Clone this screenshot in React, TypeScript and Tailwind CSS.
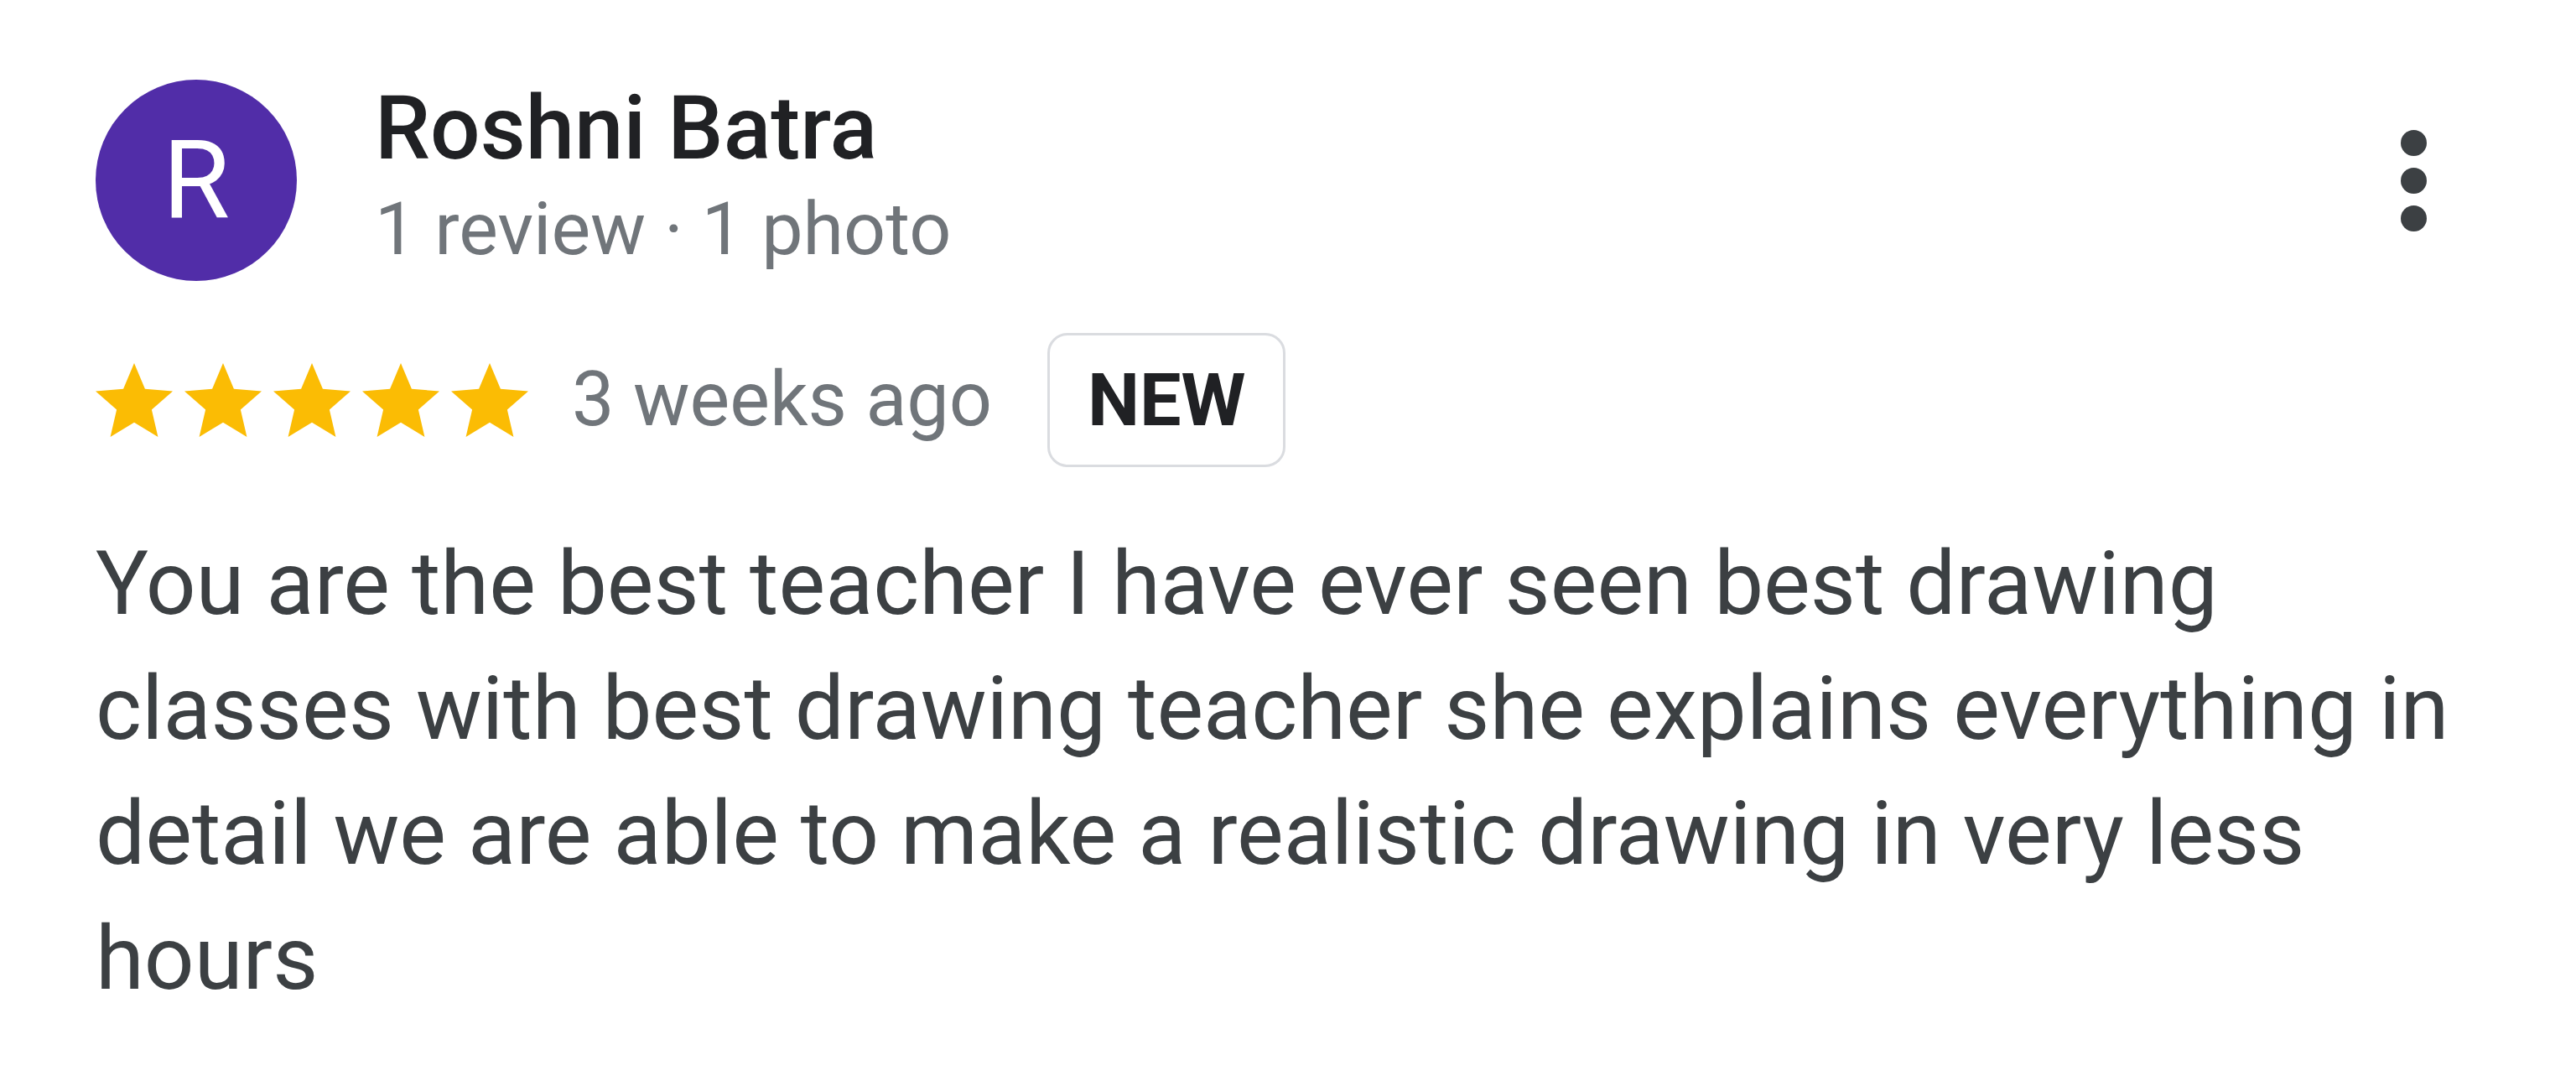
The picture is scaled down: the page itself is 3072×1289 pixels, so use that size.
import React from "react";

function Star() {
  return (
    <svg width="92" height="88" viewBox="2 2 20 19" preserveAspectRatio="none" className="block">
      <path d="M12 17.27L18.18 21l-1.64-7.03L22 9.24l-7.19-.61L12 2 9.19 8.63 2 9.24l5.46 4.73L5.82 21z" fill="#fbbc04" />
    </svg>
  );
}

export default function App() {
  return (
    <div
      className="w-[3072px] h-[1289px] bg-white pl-[114px] pr-[114px] pt-[91px] overflow-hidden"
      style={{ fontFamily: "Roboto, 'Noto Sans', sans-serif" }}
    >
      <div className="flex items-start">
        <div className="mt-[4px] w-[240px] h-[240px] rounded-full bg-[#512da8] flex items-center justify-center shrink-0">
          <span className="text-white text-[130px] leading-none">R</span>
        </div>
        <div className="ml-[93px] flex flex-col">
          <div className="text-[105px] leading-[126px] font-medium text-[#202124]">Roshni Batra</div>
          <div className="mt-[3px] text-[88px] leading-[106px] text-[#70757a]">1 review · 1 photo</div>
        </div>
        <div className="ml-auto mt-[64px] mr-[64px] flex flex-col items-center gap-[14px]">
          <div className="w-[31px] h-[31px] rounded-full bg-[#3c4043]" />
          <div className="w-[31px] h-[31px] rounded-full bg-[#3c4043]" />
          <div className="w-[31px] h-[31px] rounded-full bg-[#3c4043]" />
        </div>
      </div>

      <div className="mt-[62px] flex items-center">
        <div className="flex items-center gap-[14px]">
          <Star />
          <Star />
          <Star />
          <Star />
          <Star />
        </div>
        <div className="ml-[52px] text-[90px] leading-[100px] text-[#70757a]">3 weeks ago</div>
        <div className="ml-[66px] w-[284px] h-[160px] rounded-[24px] border-[3px] border-[#dadce0] flex items-center justify-center">
          <span className="text-[88px] leading-none font-bold text-[#202124]">NEW</span>
        </div>
      </div>

      <div className="mt-[65px] w-[2844px] text-[105px] leading-[149px] text-[#3c4043]">
        You are the best teacher I have ever seen best drawing classes with best drawing teacher she explains everything in detail we are able to make a realistic drawing in very less hours
      </div>
    </div>
  );
}
